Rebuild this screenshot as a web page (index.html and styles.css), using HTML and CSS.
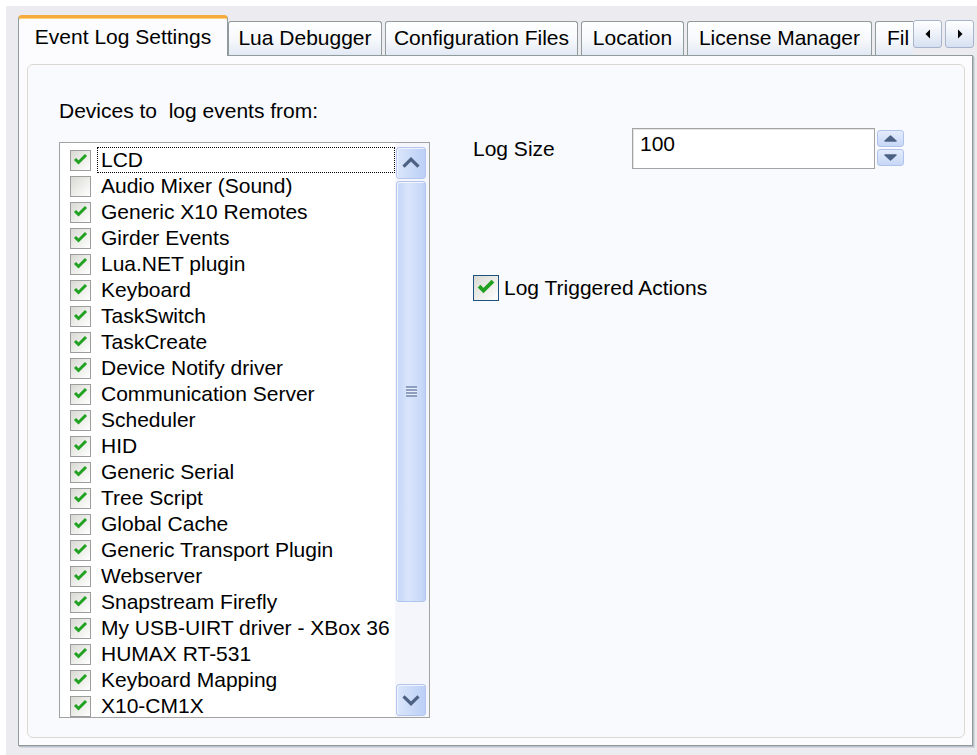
FILE: index.html
```html
<!DOCTYPE html>
<html lang="en">
<head>
<meta charset="utf-8">
<title>Options – Event Log Settings</title>
<link rel="stylesheet" href="styles.css">
</head>
<body>
<div class="window">
  <div class="tabstrip">
    <div class="tabs">
      <div class="tab active t-event">Event Log Settings</div>
      <div class="tab t-lua">Lua Debugger</div>
      <div class="tab t-config">Configuration Files</div>
      <div class="tab t-location">Location</div>
      <div class="tab t-license">License Manager</div>
      <div class="tab t-files">Fil</div>
    </div>
    <div class="tab-nav">
      <div class="nav-btn"><svg width="8" height="12" viewBox="0 0 8 12"><polygon points="6,1.5 1.5,6 6,10.5" fill="#000"/></svg></div>
      <div class="nav-btn"><svg width="8" height="12" viewBox="0 0 8 12"><polygon points="2,1.5 6.5,6 2,10.5" fill="#000"/></svg></div>
    </div>
  </div>

  <div class="pane">
    <div class="frame">
      <div class="col-devices">
        <div class="caption">Devices to  log events from:</div>
        <div class="listbox">
          <div class="rows">
            <div class="row"><span class="cb"><svg class="tick" viewBox="0 0 19 19"><polyline points="4,8 7.5,11.5 15,4"/></svg></span><span class="item focus">LCD</span></div>
            <div class="row"><span class="cb"></span><span class="item">Audio Mixer (Sound)</span></div>
            <div class="row"><span class="cb"><svg class="tick" viewBox="0 0 19 19"><polyline points="4,8 7.5,11.5 15,4"/></svg></span><span class="item">Generic X10 Remotes</span></div>
            <div class="row"><span class="cb"><svg class="tick" viewBox="0 0 19 19"><polyline points="4,8 7.5,11.5 15,4"/></svg></span><span class="item">Girder Events</span></div>
            <div class="row"><span class="cb"><svg class="tick" viewBox="0 0 19 19"><polyline points="4,8 7.5,11.5 15,4"/></svg></span><span class="item">Lua.NET plugin</span></div>
            <div class="row"><span class="cb"><svg class="tick" viewBox="0 0 19 19"><polyline points="4,8 7.5,11.5 15,4"/></svg></span><span class="item">Keyboard</span></div>
            <div class="row"><span class="cb"><svg class="tick" viewBox="0 0 19 19"><polyline points="4,8 7.5,11.5 15,4"/></svg></span><span class="item">TaskSwitch</span></div>
            <div class="row"><span class="cb"><svg class="tick" viewBox="0 0 19 19"><polyline points="4,8 7.5,11.5 15,4"/></svg></span><span class="item">TaskCreate</span></div>
            <div class="row"><span class="cb"><svg class="tick" viewBox="0 0 19 19"><polyline points="4,8 7.5,11.5 15,4"/></svg></span><span class="item">Device Notify driver</span></div>
            <div class="row"><span class="cb"><svg class="tick" viewBox="0 0 19 19"><polyline points="4,8 7.5,11.5 15,4"/></svg></span><span class="item">Communication Server</span></div>
            <div class="row"><span class="cb"><svg class="tick" viewBox="0 0 19 19"><polyline points="4,8 7.5,11.5 15,4"/></svg></span><span class="item">Scheduler</span></div>
            <div class="row"><span class="cb"><svg class="tick" viewBox="0 0 19 19"><polyline points="4,8 7.5,11.5 15,4"/></svg></span><span class="item">HID</span></div>
            <div class="row"><span class="cb"><svg class="tick" viewBox="0 0 19 19"><polyline points="4,8 7.5,11.5 15,4"/></svg></span><span class="item">Generic Serial</span></div>
            <div class="row"><span class="cb"><svg class="tick" viewBox="0 0 19 19"><polyline points="4,8 7.5,11.5 15,4"/></svg></span><span class="item">Tree Script</span></div>
            <div class="row"><span class="cb"><svg class="tick" viewBox="0 0 19 19"><polyline points="4,8 7.5,11.5 15,4"/></svg></span><span class="item">Global Cache</span></div>
            <div class="row"><span class="cb"><svg class="tick" viewBox="0 0 19 19"><polyline points="4,8 7.5,11.5 15,4"/></svg></span><span class="item">Generic Transport Plugin</span></div>
            <div class="row"><span class="cb"><svg class="tick" viewBox="0 0 19 19"><polyline points="4,8 7.5,11.5 15,4"/></svg></span><span class="item">Webserver</span></div>
            <div class="row"><span class="cb"><svg class="tick" viewBox="0 0 19 19"><polyline points="4,8 7.5,11.5 15,4"/></svg></span><span class="item">Snapstream Firefly</span></div>
            <div class="row"><span class="cb"><svg class="tick" viewBox="0 0 19 19"><polyline points="4,8 7.5,11.5 15,4"/></svg></span><span class="item">My USB-UIRT driver - XBox 36</span></div>
            <div class="row"><span class="cb"><svg class="tick" viewBox="0 0 19 19"><polyline points="4,8 7.5,11.5 15,4"/></svg></span><span class="item">HUMAX RT-531</span></div>
            <div class="row"><span class="cb"><svg class="tick" viewBox="0 0 19 19"><polyline points="4,8 7.5,11.5 15,4"/></svg></span><span class="item">Keyboard Mapping</span></div>
            <div class="row"><span class="cb"><svg class="tick" viewBox="0 0 19 19"><polyline points="4,8 7.5,11.5 15,4"/></svg></span><span class="item">X10-CM1X</span></div>
          </div>
          <div class="vscroll">
            <div class="sb-btn"><svg width="30" height="30" viewBox="0 0 30 30"><polyline class="chev" points="7,19 15,11 23,19"/></svg></div>
            <div class="sb-track">
              <div class="sb-thumb"><span class="grip"></span></div>
            </div>
            <div class="sb-btn"><svg width="30" height="30" viewBox="0 0 30 30"><polyline class="chev" points="7,11 15,19 23,11"/></svg></div>
          </div>
        </div>
      </div>

      <div class="col-options">
        <div class="field">
          <span class="field-label">Log Size</span>
          <div class="textbox">100</div>
          <div class="spin">
            <div class="spin-btn"><svg width="25" height="15" viewBox="0 0 25 15"><polygon class="caret" points="7,10 12.5,5 18,10"/></svg></div>
            <div class="spin-btn"><svg width="25" height="15" viewBox="0 0 25 15"><polygon class="caret" points="7,5 12.5,10 18,5"/></svg></div>
          </div>
        </div>
        <div class="check-row">
          <span class="cb cb-big"><svg class="tick" viewBox="0 0 19 19"><polyline points="4,8 7.5,11.5 15,4"/></svg></span>
          <span class="check-text">Log Triggered Actions</span>
        </div>
      </div>
    </div>
  </div>
</div>
</body>
</html>
```

FILE: styles.css
```css
* { box-sizing: border-box; }

html, body { margin: 0; padding: 0; background: #ffffff; }

body {
  font-family: "Liberation Sans", Arial, sans-serif;
  font-size: 21px;
  line-height: 24px;
  color: #000;
}

/* dialog surface */
.window {
  margin: 6px 0 0 6px;
  width: 971px;
  height: 749px;
  background: #ecebef;
  padding: 9px 0 0 12px;
}

/* tab strip */
.tabstrip {
  display: flex;
  height: 41px;
  position: relative;
  z-index: 2;
}

.tabs {
  display: flex;
  align-items: flex-end;
  width: 895px;
  height: 41px;
  overflow: hidden;
}

.tab {
  flex: none;
  height: 34px;
  margin-bottom: 1px;
  margin-left: 3px;
  border: 1px solid #919b9c;
  border-bottom: none;
  border-radius: 3px 3px 0 0;
  background: linear-gradient(#ffffff, #f6f8fb 55%, #e2e9f4);
  text-align: center;
  white-space: nowrap;
  overflow: hidden;
  padding-top: 4px;
}

.tab.active {
  height: 41px;
  margin-bottom: 0;
  margin-left: 0;
  border-top: 3px solid #f5ab3d;
  border-radius: 4px 4px 0 0;
  background: #fcfcfe;
  padding-top: 7px;
  box-shadow: inset 0 1px 0 #ffd27a;
}

.t-event { width: 210px; }
.t-lua { width: 154px; margin-left: 0; }
.t-config { width: 193px; }
.t-location { width: 103px; }
.t-license { width: 185px; }
.t-files { width: 90px; text-align: left; padding-left: 11px; }

.tab-nav {
  display: flex;
  gap: 3px;
  align-self: flex-start;
  margin-top: 5px;
}

.nav-btn {
  width: 29px;
  height: 28px;
  border: 1px solid #a6b4cc;
  border-radius: 3px;
  background: linear-gradient(#ffffff, #e8eef8 60%, #d6e0f1);
  display: flex;
  align-items: center;
  justify-content: center;
}

/* tab page */
.pane {
  margin-top: -1px;
  width: 955px;
  height: 691px;
  border: 1px solid #919b9c;
  background: #fcfcfe;
  box-shadow: 1px 1px 0 #b8bfca, 2px 2px 0 #d5d9e0;
  padding: 8px 0 0 8px;
}

.frame {
  width: 938px;
  height: 674px;
  border: 1px solid #dbd9d2;
  border-radius: 6px;
  background: #f9fafd;
  display: flex;
  padding: 34px 0 0 31px;
}

.caption { white-space: pre; }

/* checked list */
.listbox {
  margin-top: 19px;
  width: 371px;
  height: 576px;
  border: 1px solid #a2a2a2;
  background: #ffffff;
  display: flex;
  overflow: hidden;
}

.rows {
  flex: 1;
  min-width: 0;
  padding-top: 4px;
  overflow: hidden;
}

.row {
  display: flex;
  align-items: center;
  height: 26px;
}

.cb {
  flex: none;
  width: 21px;
  height: 21px;
  margin-left: 10px;
  border: 1px solid #9d9d9d;
  background: linear-gradient(135deg, #d9d9d4 0%, #eeeeea 55%, #ffffff 100%);
  display: flex;
}

.tick {
  width: 100%;
  height: 100%;
}

.tick polyline {
  fill: none;
  stroke: #21a121;
  stroke-width: 3;
  stroke-linecap: butt;
  stroke-linejoin: miter;
}

.item {
  flex: 1;
  min-width: 0;
  margin-left: 6px;
  padding-left: 4px;
  height: 26px;
  line-height: 26px;
  white-space: nowrap;
  overflow: hidden;
}

.item.focus {
  outline: 1px dotted #000;
  outline-offset: -1px;
}

/* vertical scroll bar */
.vscroll {
  flex: none;
  width: 34px;
  padding: 4px 3px 1px 1px;
  display: flex;
  flex-direction: column;
  background: #f4f6fc;
}

.sb-btn {
  flex: none;
  height: 32px;
  border: 1px solid #b4c6ee;
  border-radius: 3px;
  background: linear-gradient(90deg, #dbe6fb, #c7d8f8 60%, #bccff5);
  box-shadow: inset 1px 1px 0 #eef3fe;
  display: flex;
  align-items: center;
  justify-content: center;
}

.chev {
  fill: none;
  stroke: #4d6185;
  stroke-width: 3.4;
}

.sb-track {
  flex: 1;
  padding-top: 2px;
}

.sb-thumb {
  height: 421px;
  border: 1px solid #b1c4ee;
  border-radius: 3px;
  background: linear-gradient(90deg, #c4d5f7, #d9e5fb 40%, #c9d9f8 85%, #bdd0f5);
  box-shadow: inset 1px 1px 0 #f1f5fe;
  display: flex;
  align-items: center;
  justify-content: center;
}

.grip {
  width: 11px;
  height: 11px;
  background: repeating-linear-gradient(#8d9ec1 0 2px, #e9effc 2px 3px);
}

/* right-hand options */
.col-options {
  margin-left: 42px;
  padding-top: 29px;
}

.field {
  display: flex;
  align-items: center;
  height: 41px;
}

.field-label {
  width: 160px;
  padding-left: 1px;
}

.textbox {
  width: 243px;
  height: 41px;
  border: 1px solid #a3a3a3;
  box-shadow: inset 1px 1px 0 #e4e4e4;
  background: #ffffff;
  padding: 3px 7px;
  line-height: 24px;
}

.spin {
  display: flex;
  flex-direction: column;
  gap: 2px;
  margin-left: 2px;
  align-self: flex-start;
  margin-top: 2px;
}

.spin-btn {
  width: 27px;
  height: 17px;
  border: 1px solid #b1c3ea;
  border-radius: 3px;
  background: linear-gradient(#e4ecfc, #c7d7f7);
  display: flex;
  align-items: center;
  justify-content: center;
}

.caret {
  fill: #4d6185;
  stroke: #4d6185;
  stroke-width: 1.5;
  stroke-linejoin: round;
}

.check-row {
  display: flex;
  align-items: center;
  margin-top: 106px;
}

.cb-big {
  width: 26px;
  height: 26px;
  margin-left: 1px;
  border-color: #1c5180;
}

.check-text {
  margin-left: 5px;
}
```
